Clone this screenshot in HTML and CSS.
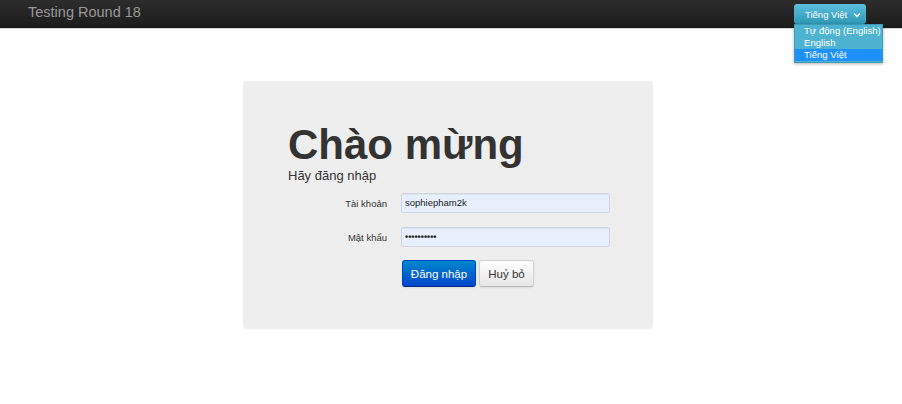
FILE: index.html
```
<!DOCTYPE html>
<html>
<head>
<meta charset="utf-8">
<link rel="stylesheet" href="styles.css">
</head>
<body>
<header class="navbar">
  <div class="brand">Testing Round 18</div>
  <div class="lang">
    <div class="lang-btn"><span>Tiếng Việt</span><svg class="chev" width="8" height="6" viewBox="0 0 8 6"><path d="M1 1.5 L4 4.5 L7 1.5" fill="none" stroke="#fff" stroke-width="1.3"/></svg></div>
    <ul class="lang-list">
      <li>Tự động (English)</li>
      <li>English</li>
      <li class="sel">Tiếng Việt</li>
    </ul>
  </div>
</header>
<main class="main">
  <section class="card">
    <h1 class="title">Chào mừng</h1>
    <p class="subtitle">Hãy đăng nhập</p>
    <form class="form">
      <div class="row">
        <label class="label">Tài khoản</label>
        <div class="input">sophiepham2k</div>
      </div>
      <div class="row">
        <label class="label">Mật khẩu</label>
        <div class="input pw">••••••••••</div>
      </div>
      <div class="actions">
        <button type="button" class="btn primary">Đăng nhập</button>
        <button type="button" class="btn">Huỷ bỏ</button>
      </div>
    </form>
  </section>
</main>
</body>
</html>
```
FILE: styles.css
```
* { box-sizing: border-box; }
html, body { margin: 0; padding: 0; background: #fff; font-family: "Liberation Sans", Arial, sans-serif; color: #333; }
.navbar {
  height: 29px;
  background: linear-gradient(#2c2c2c, #1b1b1b);
  border-bottom: 1px solid #d4d4d4;
  display: flex;
  align-items: flex-start;
  justify-content: space-between;
  padding-left: 28px;
  position: relative;
}
.brand { color: #999; font-size: 14.5px; line-height: 25px; }
.lang { position: absolute; left: 794px; top: 4px; }
.lang-btn {
  width: 72px; height: 20px;
  background: linear-gradient(#5bc0de, #2f96b4);
  border-radius: 3px;
  color: #fff; font-size: 9.5px;
  display: flex; align-items: center; justify-content: space-between;
  padding: 0 5px 0 11px;
  white-space: nowrap;
}
.chev { margin-top: 1px; }
.lang-list {
  list-style: none; margin: 0; padding: 0 0 1px 0;
  position: absolute; top: 20px; left: 0;
  width: 89px;
  background: #4eb3d0;
  border: 1px solid #3d9bb8;
  box-shadow: 0 1px 3px rgba(0,0,0,0.3);
}
.lang-list li { color: #fff; font-size: 9.6px; line-height: 12px; padding-left: 9px; white-space: nowrap; }
.lang-list li.sel { background: #1e90ff; }
.main { display: flex; justify-content: center; padding-top: 52px; padding-right: 6px; }
.card {
  width: 410px; height: 248px;
  background: #eeeeee;
  border-radius: 4px;
  padding: 40px 0 0 45px;
}
.title { margin: 0; font-size: 42px; font-weight: bold; line-height: 48px; color: #333; }
.subtitle { margin: -1px 0 0 0; font-size: 13px; line-height: 16px; color: #333; }
.form { margin-top: 9px; }
.row { display: flex; align-items: center; margin-bottom: 14px; }
.label { width: 99px; text-align: right; font-size: 9.5px; color: #333; margin-right: 14px; }
.input {
  width: 209px; height: 20px;
  background: #e8f0fe;
  border: 1px solid #cfd6df;
  border-radius: 2px;
  font-size: 9.5px; color: #222;
  padding: 0 3px; line-height: 18px;
  box-shadow: inset 0 1px 1px rgba(0,0,0,0.06);
}
.input.pw { font-size: 9px; font-weight: bold; }
.actions { display: flex; gap: 3px; padding-left: 114px; margin-top: -1px; }
.btn {
  height: 27px; padding: 0;
  width: 55px;
  white-space: nowrap;
  font-family: inherit; font-size: 11.5px; color: #333;
  background: linear-gradient(#ffffff, #e6e6e6);
  border: 1px solid #d0d0d0;
  border-bottom-color: #b8b8b8;
  border-radius: 3px;
  box-shadow: 0 1px 2px rgba(0,0,0,0.08);
}
.btn.primary {
  width: 74px; padding: 0;
  color: #fff;
  background: linear-gradient(#0088cc, #0044cc);
  border-color: #0044cc #0044cc #002a80;
}
```
